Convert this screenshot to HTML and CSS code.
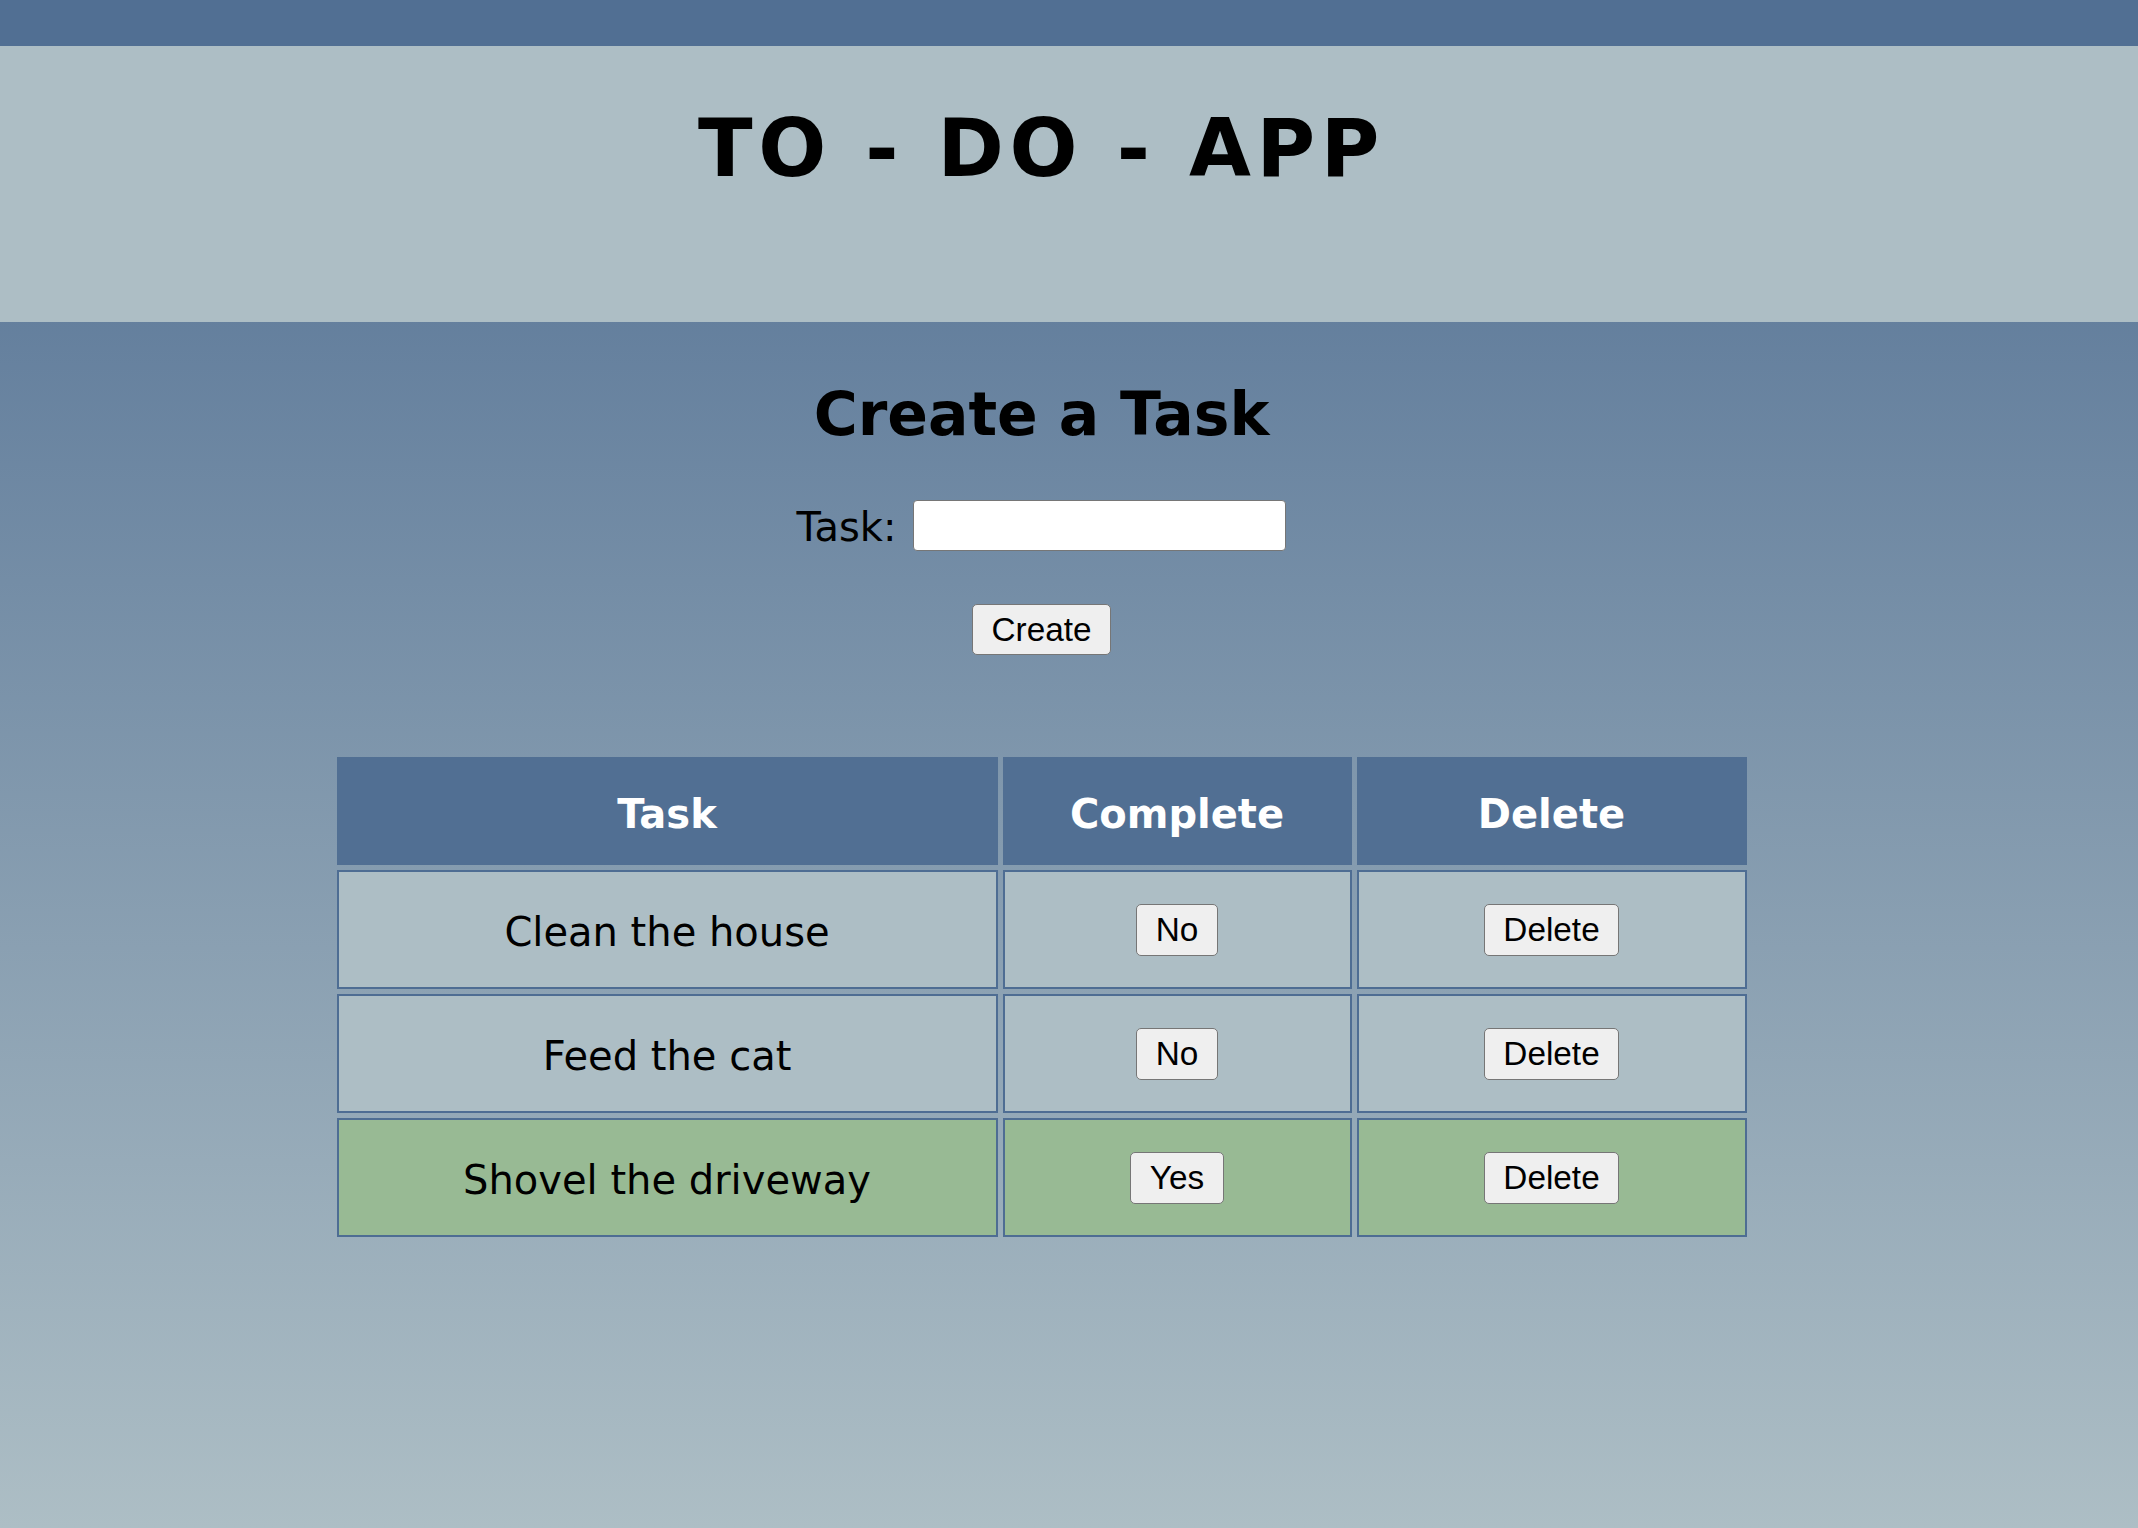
FILE: index.html
```html
<!DOCTYPE html>
<html lang="en">
<head>
<meta charset="utf-8">
<title>TO - DO - APP</title>
<link rel="stylesheet" href="styles.css">
</head>
<body>
<div class="topbar"></div>
<header class="banner">
  <h1 class="title">TO - DO - APP</h1>
</header>
<main class="content">
  <h2 class="section-title">Create a Task</h2>
  <form class="task-form">
    <div class="field">
      <label for="task" class="field-label">Task:</label>
      <input id="task" class="field-input" type="text">
    </div>
    <button type="button" class="btn btn-create">Create</button>
  </form>
  <table class="tasks">
    <thead>
      <tr>
        <th class="col-task">Task</th>
        <th class="col-complete">Complete</th>
        <th class="col-delete">Delete</th>
      </tr>
    </thead>
    <tbody>
      <tr>
        <td class="task-name">Clean the house</td>
        <td><button type="button" class="btn">No</button></td>
        <td><button type="button" class="btn">Delete</button></td>
      </tr>
      <tr>
        <td class="task-name">Feed the cat</td>
        <td><button type="button" class="btn">No</button></td>
        <td><button type="button" class="btn">Delete</button></td>
      </tr>
      <tr class="done">
        <td class="task-name">Shovel the driveway</td>
        <td><button type="button" class="btn">Yes</button></td>
        <td><button type="button" class="btn">Delete</button></td>
      </tr>
    </tbody>
  </table>
</main>
</body>
</html>
```
FILE: styles.css
```css
html {
  min-height: 100%;
  background: linear-gradient(#516f93, #adbec5);
}

body {
  margin: 0;
  font-family: "DejaVu Sans", Verdana, sans-serif;
  color: #000;
}

.topbar {
  height: 46px;
  background: #516f93;
}

.banner {
  box-sizing: border-box;
  height: 276px;
  padding: 56px 55px 0 0;
  background: #adbec5;
  text-align: center;
}

.title {
  margin: 0;
  font-size: 80px;
  font-weight: bold;
  letter-spacing: 5.6px;
  line-height: normal;
}

.content {
  padding: 57px 55px 0 0;
  text-align: center;
}

.section-title {
  margin: 0;
  font-size: 60px;
  font-weight: bold;
  line-height: normal;
}

.task-form {
  display: flex;
  flex-direction: column;
  align-items: center;
  gap: 53px;
  margin-top: 51px;
}

.field {
  display: flex;
  align-items: center;
  gap: 17px;
  font-size: 40px;
}

.field-label {
  padding-top: 2px;
}

.field-input {
  box-sizing: border-box;
  width: 373px;
  height: 51px;
  padding: 0 6px;
  border: 1px solid #767676;
  border-radius: 4px;
  background: #fff;
  font-size: 33px;
}

.btn {
  box-sizing: border-box;
  height: 52px;
  padding: 0 18.5px;
  border: 1px solid #767676;
  border-radius: 5px;
  background: #efefef;
  color: #000;
  font-family: "Liberation Sans", Arial, sans-serif;
  font-size: 33.33px;
}

.btn-create {
  height: 51px;
}

.tasks {
  margin: 97px auto 0;
  width: 1420px;
  table-layout: fixed;
  border-collapse: separate;
  border-spacing: 5px;
}

.tasks th,
.tasks td {
  box-sizing: border-box;
  padding: 0;
  text-align: center;
  font-size: 40px;
}

.tasks th,
.tasks td.task-name {
  padding-top: 5px;
}

.tasks thead tr {
  height: 108px;
}

.tasks tbody tr {
  height: 119px;
}

.tasks th {
  border: 2px solid #516f93;
  background: #516f93;
  color: #fff;
  font-weight: bold;
}

.col-task { width: 661px; }
.col-complete { width: 349px; }
.col-delete { width: 390px; }

.tasks td {
  border: 2px solid #4e6d93;
  background: #adbec5;
  font-weight: normal;
}

.tasks tr.done td {
  background: #98ba94;
}
```
